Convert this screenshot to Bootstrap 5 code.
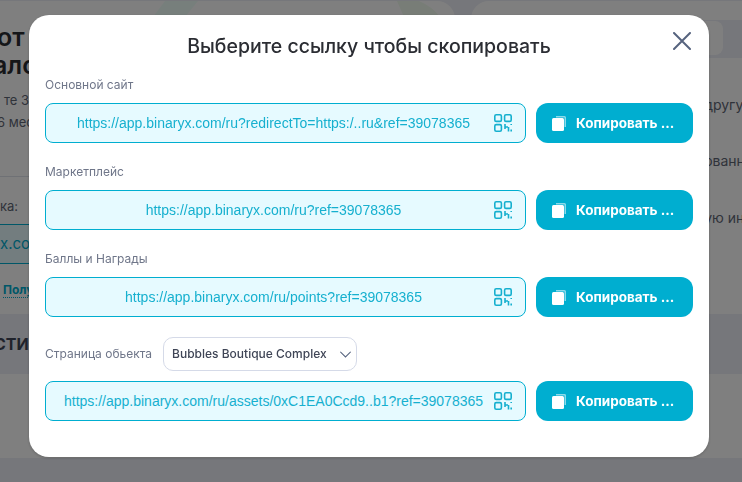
<!DOCTYPE html>
<html lang="ru">
<head>
    <meta charset="UTF-8">
    <meta name="viewport" content="width=device-width, initial-scale=1.0">
    <title>Реферальные ссылки</title>
    <link href="https://cdn.jsdelivr.net/npm/bootstrap@5.3.0/dist/css/bootstrap.min.css" rel="stylesheet">
    <style>
        html, body { height: 100%; overflow: hidden; }
        body { background: #eceef6; font-family: Inter, "Noto Sans", sans-serif; color: #2b2d33; }

        /* page behind the modal */
        .page-top { height: 313px; margin-top: 1px; gap: 16px; }
        .hero-card { width: 460px; background: #fff; border-radius: 0 18px 0 0; overflow: hidden; position: relative; }
        .side-card { background: #fff; border-radius: 18px 0 0 0; overflow: hidden; padding-top: 19px; }
        .deco { position: absolute; left: 150px; top: 0; }
        .hero-title { font-size: 25px; font-weight: 600; line-height: 28px; color: #2b2d33; padding-top: 22px; margin: 0; }
        .hero-title span { display: block; white-space: nowrap; }
        .hero-title .first { margin-left: -3px; }
        .hero-title .second { margin-left: -7px; }
        .hero-text { font-size: 13px; line-height: 22px; color: #5f6675; margin: 10px 0 0; height: 87px; }
        .hero-text span { display: block; white-space: nowrap; }
        .hero-text .first { margin-left: 4px; }
        .hero-text .second { margin-left: -3px; }
        .hero-foot { border-top: 1px solid #dfe2ea; padding-top: 20px; }
        .hero-label { font-size: 13px; line-height: 18px; color: #5f6675; margin-bottom: 9px; }
        .hero-input { height: 40px; background: #e6faff; border-top: 1px solid #00aed0; border-bottom: 1px solid #00aed0; color: #00aed0; font-size: 15px; line-height: 38px; }
        .hero-link { font-size: 12px; font-weight: 700; color: #00aed0; margin: 17px 0 0 3px; line-height: 18px; }
        .hero-link span { border-bottom: 1px dotted #00aed0; }
        .tabs-bar { height: 38px; background: #eceef6; padding-right: 19px; }
        .tabs-bar div { width: 147px; height: 34px; margin-top: 1px; background: #fff; border-radius: 8px; }
        .side-line { font-size: 14px; line-height: 20px; color: #5f6675; padding-left: 233px; white-space: nowrap; }
        .line-1 { margin-top: 37px; }
        .line-2 { margin-top: 36px; }
        .line-3 { margin-top: 37px; }
        .band { height: 60px; font-size: 16px; font-weight: 700; color: #3f4556; }
        .band span { margin-left: -6px; }
        .page-bottom { height: 84px; background: #fff; }

        /* modal */
        .modal { overflow: hidden; }
        .modal-dialog.links-dialog { width: 680px; max-width: 680px; margin: 15px 0 0 29px; }
        .links-dialog .modal-content { height: 442px; border: 0; border-radius: 20px; padding: 0 16px; box-shadow: 0 1px 3px rgba(0,0,0,.2); }
        .links-head { height: 61px; padding-top: 17px; position: relative; }
        .links-title { font-size: 19.5px; font-weight: 500; line-height: 28px; color: #2b2d33; margin: 0; text-align: center; }
        .btn-x { position: absolute; right: 2px; top: 17px; padding: 0; border: 0; background: none; line-height: 0; }
        .link-label { font-size: 12px; line-height: 18px; color: #6f7689; margin: 0 0 9px; }
        .link-group { margin-bottom: 20px; }
        .link-field { width: 481px; height: 40px; background: #e6faff; border: 1px solid #00aed0; border-radius: 8px; padding: 0 13px 0 11.5px; gap: 4.5px; }
        .link-url { font-family: "Liberation Sans", Arial, sans-serif; font-size: 14px; color: #16b0cf; white-space: nowrap; }
        .btn-copy { width: 157px; height: 40px; margin-left: 10px; padding: 0 0 0 16px; background: #00aed0; border: 0; border-radius: 12px; color: #fff; font-size: 13.5px; font-weight: 700; gap: 10px; }
        .btn-copy:hover { background: #00aed0; color: #fff; }
        .object-row { margin-bottom: 10px; gap: 11px; }
        .object-row .link-label { margin: 0; white-space: nowrap; }
        .object-select { width: 194px; height: 34px; padding: 0 24px 0 8px; border: 1px solid #d5dae8; border-radius: 10px; font-family: inherit; font-size: 12px; font-weight: 500; color: #3f4556;
            background-image: url("data:image/svg+xml,%3csvg xmlns='http://www.w3.org/2000/svg' viewBox='0 0 16 16'%3e%3cpath fill='none' stroke='%235a6782' stroke-linecap='round' stroke-width='1.3' d='M2 5l6 6 6-6'/%3e%3c/svg%3e");
            background-position: right 4px center; background-size: 13px 13px; }
    </style>
</head>
<body>
    <div class="d-flex page-top">
        <div class="hero-card">
            <svg class="deco" width="295" height="16" viewBox="0 0 295 16">
                <path d="M15 0h33L35 16H3z" fill="#eefff9"/>
                <path d="M247 0h22q14 6 21 16h-36z" fill="#f0fbee"/>
            </svg>
            <h2 class="hero-title"><span class="first">от</span><span class="second">ало</span></h2>
            <p class="hero-text"><span class="first">те 3</span><span class="second">6 мес</span></p>
            <div class="hero-foot">
                <div class="hero-label">ка:</div>
                <div class="hero-input">x.com</div>
                <div class="hero-link"><span>Полу</span></div>
            </div>
        </div>
        <div class="side-card flex-fill">
            <div class="tabs-bar d-flex justify-content-end"><div></div></div>
            <div class="side-line line-1">другу</div>
            <div class="side-line line-2">ованн</div>
            <div class="side-line line-3">ую ин</div>
        </div>
    </div>
    <div class="band d-flex align-items-center"><span>СТИК</span></div>
    <div class="page-bottom"></div>

    <div class="modal-backdrop show"></div>
    <div class="modal d-block" tabindex="-1">
        <div class="modal-dialog links-dialog">
            <div class="modal-content">
                <div class="links-head">
                    <h5 class="links-title">Выберите ссылку чтобы скопировать</h5>
                    <button type="button" class="btn-x" aria-label="Закрыть">
                        <svg width="18" height="18" viewBox="0 0 18 18"><path d="M1 1l16 16M17 1L1 17" stroke="#56637e" stroke-width="2" stroke-linecap="round"/></svg>
                    </button>
                </div>

                <div class="link-group">
                    <p class="link-label">Основной сайт</p>
                    <div class="d-flex">
                        <div class="link-field d-flex align-items-center">
                            <span class="link-url flex-fill text-center">https://app.binaryx.com/ru?redirectTo=https:/..ru&amp;ref=39078365</span>
                            <svg width="18" height="18" viewBox="0 0 18 18" fill="none" stroke="#16b0cf" stroke-width="1.6"><rect x=".8" y=".8" width="6.6" height="6.6" rx="1.400"/><rect x="10.6" y=".8" width="6.6" height="6.6" rx="1.400"/><rect x=".8" y="10.6" width="6.6" height="6.6" rx="1.400"/><path d="M11 10v5M11 13h3M14.500 13v4.500M17.200 10v1M17.200 15.500v2"/></svg>
                        </div>
                        <button type="button" class="btn btn-copy d-flex align-items-center">
                            <svg width="14" height="15" viewBox="0 0 14 15"><path d="M4 0h8.500a1.500 1.500 0 0 1 1.500 1.500V11h-1.500V1.500H4z" fill="#fff" opacity=".55"/><rect y="2" width="12" height="13" rx="1.500" fill="#fff"/></svg>
                            Копировать ...
                        </button>
                    </div>
                </div>

                <div class="link-group">
                    <p class="link-label">Маркетплейс</p>
                    <div class="d-flex">
                        <div class="link-field d-flex align-items-center">
                            <span class="link-url flex-fill text-center">https://app.binaryx.com/ru?ref=39078365</span>
                            <svg width="18" height="18" viewBox="0 0 18 18" fill="none" stroke="#16b0cf" stroke-width="1.6"><rect x=".8" y=".8" width="6.6" height="6.6" rx="1.400"/><rect x="10.6" y=".8" width="6.6" height="6.6" rx="1.400"/><rect x=".8" y="10.6" width="6.6" height="6.6" rx="1.400"/><path d="M11 10v5M11 13h3M14.500 13v4.500M17.200 10v1M17.200 15.500v2"/></svg>
                        </div>
                        <button type="button" class="btn btn-copy d-flex align-items-center">
                            <svg width="14" height="15" viewBox="0 0 14 15"><path d="M4 0h8.500a1.500 1.500 0 0 1 1.500 1.500V11h-1.500V1.500H4z" fill="#fff" opacity=".55"/><rect y="2" width="12" height="13" rx="1.500" fill="#fff"/></svg>
                            Копировать ...
                        </button>
                    </div>
                </div>

                <div class="link-group">
                    <p class="link-label">Баллы и Награды</p>
                    <div class="d-flex">
                        <div class="link-field d-flex align-items-center">
                            <span class="link-url flex-fill text-center">https://app.binaryx.com/ru/points?ref=39078365</span>
                            <svg width="18" height="18" viewBox="0 0 18 18" fill="none" stroke="#16b0cf" stroke-width="1.6"><rect x=".8" y=".8" width="6.6" height="6.6" rx="1.400"/><rect x="10.6" y=".8" width="6.6" height="6.6" rx="1.400"/><rect x=".8" y="10.6" width="6.6" height="6.6" rx="1.400"/><path d="M11 10v5M11 13h3M14.500 13v4.500M17.200 10v1M17.200 15.500v2"/></svg>
                        </div>
                        <button type="button" class="btn btn-copy d-flex align-items-center">
                            <svg width="14" height="15" viewBox="0 0 14 15"><path d="M4 0h8.500a1.500 1.500 0 0 1 1.500 1.500V11h-1.500V1.500H4z" fill="#fff" opacity=".55"/><rect y="2" width="12" height="13" rx="1.500" fill="#fff"/></svg>
                            Копировать ...
                        </button>
                    </div>
                </div>

                <div class="object-row d-flex align-items-center">
                    <p class="link-label">Страница обьекта</p>
                    <select class="form-select object-select"><option>Bubbles Boutique Complex</option></select>
                </div>
                <div class="d-flex">
                    <div class="link-field d-flex align-items-center">
                        <span class="link-url flex-fill text-center">https://app.binaryx.com/ru/assets/0xC1EA0Ccd9..b1?ref=39078365</span>
                        <svg width="18" height="18" viewBox="0 0 18 18" fill="none" stroke="#16b0cf" stroke-width="1.6"><rect x=".8" y=".8" width="6.6" height="6.6" rx="1.400"/><rect x="10.6" y=".8" width="6.6" height="6.6" rx="1.400"/><rect x=".8" y="10.6" width="6.6" height="6.6" rx="1.400"/><path d="M11 10v5M11 13h3M14.500 13v4.500M17.200 10v1M17.200 15.500v2"/></svg>
                    </div>
                    <button type="button" class="btn btn-copy d-flex align-items-center">
                        <svg width="14" height="15" viewBox="0 0 14 15"><path d="M4 0h8.500a1.500 1.500 0 0 1 1.500 1.500V11h-1.500V1.500H4z" fill="#fff" opacity=".55"/><rect y="2" width="12" height="13" rx="1.500" fill="#fff"/></svg>
                        Копировать ...
                    </button>
                </div>
            </div>
        </div>
    </div>

    <script src="https://cdn.jsdelivr.net/npm/bootstrap@5.3.0/dist/js/bootstrap.bundle.min.js"></script>
</body>
</html>
